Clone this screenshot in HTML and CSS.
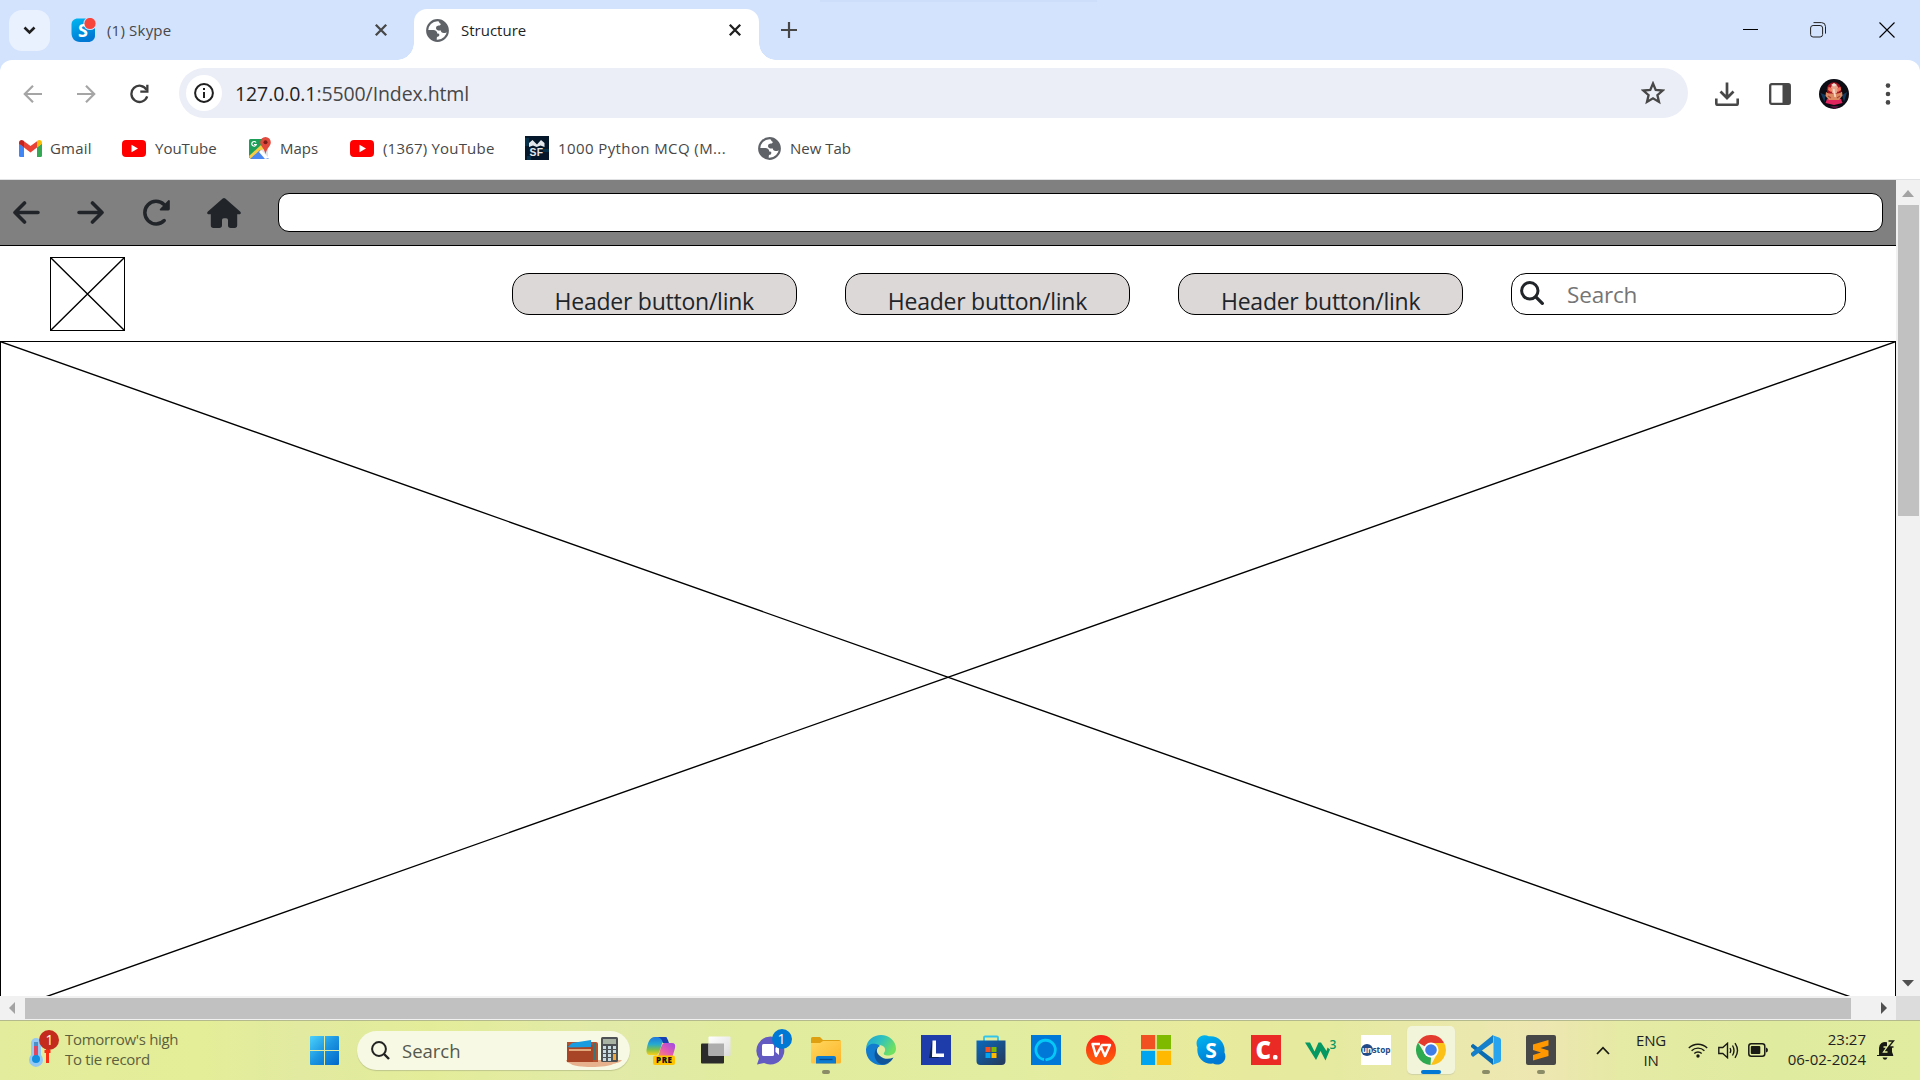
FILE: index.html
```html
<!DOCTYPE html>
<html lang="en">
<head>
<meta charset="utf-8">
<title>Structure</title>
<link rel="stylesheet" href="styles.css">
</head>
<body>
<svg class="defs" width="0" height="0" aria-hidden="true">
  <defs>
    <linearGradient id="sky" x1="0" y1="0" x2="0.4" y2="1"><stop offset="0" stop-color="#00b8f1"/><stop offset="1" stop-color="#0078d4"/></linearGradient>
    <linearGradient id="win" x1="0" y1="0" x2="1" y2="1"><stop offset="0" stop-color="#4cd2fc"/><stop offset="0.5" stop-color="#1b94e0"/><stop offset="1" stop-color="#0067c9"/></linearGradient>
    <symbol id="globe" viewBox="0 0 22 22"><circle cx="11" cy="11" r="9.900" fill="#fff" stroke="#5f6368" stroke-width="2"/><path d="M1.500 10.500H7Q10.500 10.800 10.800 13.800L12.500 14.200Q13.500 17 10.500 17.200L10 20.800A10 10 0 0 1 1.500 10.500z" fill="#5f6368"/><path d="M12.500 1.300A10 10 0 0 1 20.800 11Q20 13.500 17 13.500 14.200 13.200 14.200 11 10 11.500 9.500 8.500 9.500 6.500 12 6.300 14.500 6 14 4.500 12 4 12.500 1.300z" fill="#5f6368"/></symbol>
    <symbol id="youtube" viewBox="0 0 24 17"><rect width="24" height="17" rx="4" fill="#f00"/><path d="M9.500 4.800v7.400l6.500-3.700z" fill="#fff"/></symbol>
    <symbol id="cross" viewBox="0 0 14 14"><path d="M1.800 1.800l10.400 10.400M12.200 1.800L1.800 12.200" stroke="currentColor" stroke-width="2.300" fill="none"/></symbol>
    <symbol id="skype" viewBox="0 0 30 30"><path d="M8.500.3C10 .3 11.500.8 12.800 1.300 22 0 30 8 28.400 17.300 31.500 23.500 27 30 20.800 29.600c-1.300 0-2.600-.4-3.600-1C8 30 0 22 1.500 12.600-1.300 6.500 2.500.5 8.500.3z" fill="url(#sky)"/></symbol>
  </defs>
</svg>

<header class="tabstrip">
  <div class="top-shade"></div>
  <button class="tab-search"><svg width="13" height="9" viewBox="0 0 13 9"><path d="M1.500 1.500l5 5 5-5" fill="none" stroke="#1f1f1f" stroke-width="2.600"/></svg></button>
  <div class="tab">
    <svg width="25" height="25" viewBox="0 0 25 25"><path d="M7 .5h11c4 0 6 3 6 7v10c0 4-3 6.500-7 6.500H9C3.500 24 .5 20 .5 15V6.500C.500 3 3 .500 7 .5z" fill="url(#sky)"/><circle cx="19" cy="5.500" r="6.600" fill="#d3e3fd"/><text x="12" y="18.500" class="glyph" font-size="18" text-anchor="middle">S</text><circle cx="19" cy="5.500" r="5.600" fill="#f8453c"/></svg>
    <span class="tab-title dim">(1) Skype</span>
    <svg class="tab-close dim" width="14" height="14"><use href="#cross"/></svg>
  </div>
  <div class="tab active">
    <svg width="23" height="23"><use href="#globe"/></svg>
    <span class="tab-title">Structure</span>
    <svg class="tab-close" width="14" height="14"><use href="#cross"/></svg>
  </div>
  <svg class="new-tab" width="16" height="16" viewBox="0 0 16 16"><path d="M8 0v16M0 8h16" stroke="#474747" stroke-width="2.200"/></svg>
  <div class="window-controls">
    <svg width="16" height="16" viewBox="0 0 16 16"><path d="M0 7.500h15" stroke="#000"/></svg>
    <svg width="16" height="16" viewBox="0 0 16 16"><rect x=".6" y="3.500" width="12" height="11.500" rx="2.500" fill="none" stroke="#222"/><path d="M3.500.6h8a4 4 0 0 1 4 4v7" fill="none" stroke="#222"/></svg>
    <svg class="win-close" width="16" height="16" viewBox="0 0 16 16"><path d="M.5.500l15 15M15.500.500l-15 15" stroke="#000" stroke-width="1.100"/></svg>
  </div>
</header>

<div class="chrome">
  <div class="toolbar">
    <svg class="nav" width="20" height="20" viewBox="0 0 20 20"><path d="M19 10H2.500M10 1.800L1.800 10l8.200 8.200" fill="none" stroke="#a5a5a5" stroke-width="2.200"/></svg>
    <svg class="nav" width="20" height="20" viewBox="0 0 20 20"><path d="M1 10h16.500M10 1.800l8.200 8.200-8.200 8.200" fill="none" stroke="#a5a5a5" stroke-width="2.200"/></svg>
    <svg class="nav" width="20" height="20" viewBox="0 0 20 20"><path d="M18.200 12.400a8.100 8.100 0 1 1-.6-6.500" fill="none" stroke="#3c3c3c" stroke-width="2.300"/><path d="M19.500.8v8h-8.200V6.500h5.900V.8z" fill="#3c3c3c"/></svg>
    <div class="omnibox">
      <span class="site-info"><svg width="20" height="20" viewBox="0 0 20 20"><circle cx="10" cy="10" r="8.900" fill="none" stroke="#1f1f1f" stroke-width="2"/><path d="M9 9h2v6H9zM9 5h2v2H9z" fill="#1f1f1f"/></svg></span>
      <span class="url"><b>127.0.0.1</b>:5500/Index.html</span>
      <svg class="star" width="24" height="24" viewBox="0 0 24 24"><path d="M12 2.500l2.700 6.400 7 .6-5.300 4.600 1.600 6.800-6-3.600-6 3.600 1.600-6.800-5.300-4.600 7-.6z" fill="none" stroke="#474747" stroke-width="2.300"/></svg>
    </div>
    <svg class="download" width="24" height="24" viewBox="0 0 24 24"><path d="M12 .5v15M5.500 9.500l6.500 6.500 6.500-6.500" fill="none" stroke="#474747" stroke-width="2.700"/><path d="M1.300 16.500v5a1.300 1.300 0 0 0 1.300 1.300h18.800a1.300 1.300 0 0 0 1.300-1.300v-5" fill="none" stroke="#474747" stroke-width="2.600"/></svg>
    <svg class="panel" width="22" height="22" viewBox="0 0 22 22"><rect x="1.200" y="1.200" width="19.600" height="19.600" rx="1.500" fill="none" stroke="#474747" stroke-width="2.300"/><path d="M13.500 1h7v20h-7z" fill="#474747"/></svg>
    <svg class="avatar" width="30" height="30" viewBox="0 0 30 30"><circle cx="15" cy="15" r="15" fill="#0b0c14"/><path d="M1.500 14l5 2-1 7z M28 13l-5 3 2 7z" fill="#123a5e"/><circle cx="15" cy="10.500" r="7.200" fill="#a3121f"/><path d="M8 20q7-3 14 0l1.500 4-8.500 2-8.500-2z" fill="#e0245e"/><ellipse cx="15.500" cy="10" rx="3.800" ry="4.500" fill="#e8a58c"/><path d="M9.500 8l3.500 1-1 4-3-2z M21.500 8L18 9l1 4 3-2z" fill="#f0765c"/><path d="M7 13q3 2 5 1.500h6.500q2.500 0 4.500-2l.5 4-3.500 4.500H10l-3.500-4z" fill="#dd8a62"/><path d="M15 10c-1 4 2 5 1 8" stroke="#f8d8c5" stroke-width="1.800" fill="none"/><path d="M12 6l3-2 3 2-3 1.500z" fill="#eadfd2"/><path d="M9 17l3 2M21 17l-3 2" stroke="#a84a35" stroke-width="1.200"/><path d="M11 27h9l-4 3z" fill="#54123c"/></svg>
    <svg class="dots" width="6" height="22" viewBox="0 0 6 22"><g fill="#474747"><circle cx="3" cy="2.600" r="2.300"/><circle cx="3" cy="11" r="2.300"/><circle cx="3" cy="19.400" r="2.300"/></g></svg>
  </div>
  <nav class="bookmarks">
    <a class="bm bm-gmail"><svg width="23" height="17" viewBox="0 0 23 17"><path d="M0 3.500l5 3.800V17H1.500A1.500 1.500 0 0 1 0 15.500z" fill="#4285f4"/><path d="M18 7.300l5-3.800v12a1.500 1.500 0 0 1-1.500 1.500H18z" fill="#34a853"/><path d="M5 1.200L11.500 6 18 1.200v6.300l-6.500 5L5 7.500z" fill="#ea4335"/><path d="M0 2.500C0 .2 2.700-.7 4.300.6l.7.6v6.300l-5-3.800z" fill="#c5221f"/><path d="M23 2.500c0-2.300-2.700-3.200-4.300-1.900l-.7.6v6.300l5-3.800z" fill="#fbbc04"/></svg><span>Gmail</span></a>
    <a class="bm bm-yt"><svg width="24" height="17"><use href="#youtube"/></svg><span>YouTube</span></a>
    <a class="bm bm-maps"><svg width="22" height="23" viewBox="0 0 22 23"><path d="M1.500 2H13l6 10v9.500H1.500A1.500 1.500 0 0 1 0 20V3.500A1.500 1.500 0 0 1 1.500 2z" fill="#e2e5e8"/><path d="M1.500 2h12L12 10 0 21V3.500A1.500 1.500 0 0 1 1.500 2z" fill="#1d9e59"/><path d="M0 19L12 8l3 3L4 22H1.500z" fill="#f8cd45"/><path d="M1 22l10-9 9 9z" fill="#4a87f2"/><path d="M16 22l-6-7 2-2 8 8z" fill="#fff"/><path d="M16.500 0a5.300 5.300 0 0 1 5.300 5.300c0 4-4.300 6-5.300 12-1-6-5.300-8-5.300-12A5.300 5.300 0 0 1 16.500 0z" fill="#e04b3e"/><circle cx="16.500" cy="5.300" r="2" fill="#7d1d18"/><path d="M7 5.500a2.300 2.300 0 1 0 .3 2H5" fill="none" stroke="#fff" stroke-width="1.200"/></svg><span>Maps</span></a>
    <a class="bm bm-yt2"><svg width="24" height="17"><use href="#youtube"/></svg><span>(1367) YouTube</span></a>
    <a class="bm bm-sf"><svg width="24" height="24" viewBox="0 0 24 24"><rect width="24" height="24" fill="#04172b"/><path d="M0 2h4v8H0zM18 13h6v3h-6zM2 20h4v4H2z" fill="#07304a"/><path d="M4 11V7l3.500-3 4.500 4.500L16 4l3.500 3v4l-4-1.500-3.800 1.500L8 9.500z" fill="#e4e8ec"/><text x="4.500" y="20" class="glyph sf" font-size="10" textLength="14" lengthAdjust="spacingAndGlyphs">SF</text></svg><span>1000 Python MCQ (M...</span></a>
    <a class="bm bm-new"><svg width="23" height="23"><use href="#globe"/></svg><span>New Tab</span></a>
  </nav>
</div>

<div class="viewport">
  <main class="page">
    <div class="browser-bar">
      <svg class="b-left" width="27" height="23" viewBox="0 0 27 23"><path d="M25 11.500H2M11.500 2L2 11.500l9.500 9.500" fill="none" stroke="#212529" stroke-width="3.600" stroke-linecap="round" stroke-linejoin="round"/></svg>
      <svg class="b-right" width="27" height="23" viewBox="0 0 27 23"><path d="M2 11.500h23M15.500 2l9.500 9.500-9.500 9.500" fill="none" stroke="#212529" stroke-width="3.600" stroke-linecap="round" stroke-linejoin="round"/></svg>
      <svg class="b-reload" width="28" height="27" viewBox="0 0 28 27"><path d="M22.200 21.500A11.300 11.300 0 1 1 22 5.500L24 7.500" fill="none" stroke="#212529" stroke-width="3.500" stroke-linecap="round"/><path d="M26.300 1.200q1.500-.5 1.500 1V10q0 1.400-1.400 1.400h-7.800q-1.500-.1-.6-1.400z" fill="#212529"/></svg>
      <svg class="b-home" width="34" height="30" viewBox="0 0 34 30"><path d="M15.700.6a2 2 0 0 1 2.600 0l14.800 13c1.400 1.300.6 2.700-1 2.700h-1.900v11q0 2.700-2.700 2.700h-3.800q-2.700 0-2.700-2.700v-5.200q0-1.900-1.900-1.900h-2.200q-1.900 0-1.900 1.900v5.200q0 2.700-2.700 2.700H6.500q-2.700 0-2.700-2.700v-11H1.900c-1.600 0-2.400-1.400-1-2.700z" fill="#212529"/></svg>
      <div class="address"></div>
    </div>
    <div class="site-header">
      <svg class="logo" width="75" height="74" viewBox="0 0 75 74"><rect x=".5" y=".5" width="74" height="73" fill="#fff" stroke="#000"/><path d="M.5.500l74 73M74.500.500l-74 73" stroke="#000" stroke-width="1.400"/></svg>
      <div class="header-link">Header button/link</div>
      <div class="header-link">Header button/link</div>
      <div class="header-link">Header button/link</div>
      <div class="site-search"><svg width="24" height="24" viewBox="0 0 24 24"><circle cx="9.800" cy="9.800" r="8.200" fill="none" stroke="#212529" stroke-width="3"/><path d="M15.800 15.800l6.500 6.500" stroke="#212529" stroke-width="3.300" stroke-linecap="round"/></svg><span>Search</span></div>
    </div>
    <div class="hero"><svg width="1896" height="673" viewBox="0 0 1896 673"><rect x=".5" y=".5" width="1895" height="672" fill="none" stroke="#000"/><path d="M0 .5l1896 671.500M1896 .5L0 672" stroke="#000" stroke-width="1.400"/></svg></div>
  </main>
  <div class="vscroll">
    <svg width="12" height="7" viewBox="0 0 12 7"><path d="M6 0l6 7H0z" fill="#a3a3a3"/></svg>
    <div class="vthumb"></div>
    <svg class="end" width="12" height="7" viewBox="0 0 12 7"><path d="M6 6.500L12 0H0z" fill="#505050"/></svg>
  </div>
  <div class="hscroll">
    <svg width="7" height="12" viewBox="0 0 7 12"><path d="M0 6l6-6v12z" fill="#a3a3a3"/></svg>
    <div class="hthumb"></div>
    <svg class="end" width="7" height="12" viewBox="0 0 7 12"><path d="M6 6L0 0v12z" fill="#505050"/></svg>
  </div>
  <div class="corner"></div>
</div>

<footer class="taskbar">
  <div class="weather">
    <svg width="32" height="38" viewBox="0 0 32 38"><path d="M2 13a5 5 0 0 1 10 0v12a7 7 0 1 1-10 0z" fill="#94c9f5"/><path d="M5 14a2 2 0 0 1 4 0v13H5z" fill="#e0475f"/><path d="M5 12h4v4H5z" fill="#4c8fc6"/><circle cx="7" cy="29" r="4" fill="#1290df"/><path d="M18.500 19v14M15.500 21.500h6" stroke="#fb2c16" stroke-width="3"/><circle cx="20" cy="10" r="10" fill="#c42b1c"/><text x="20.500" y="15" class="glyph thin" font-size="14" text-anchor="middle">1</text></svg>
    <div class="weather-text"><span>Tomorrow's high</span><span>To tie record</span></div>
  </div>
  <svg class="start" width="29" height="29" viewBox="0 0 29 29"><path d="M1 0h13v14H0V1q0-1 1-1zM15 0h13q1 0 1 1v13H15zM0 15h14v14H1q-1 0-1-1zM15 15h14v13q0 1-1 1H15z" fill="url(#win)"/></svg>
  <div class="task-search">
    <svg width="19" height="19" viewBox="0 0 19 19"><circle cx="8" cy="8" r="6.900" fill="none" stroke="#222" stroke-width="2"/><path d="M13 13l5 5" stroke="#222" stroke-width="2.400"/></svg>
    <span>Search</span>
    <svg class="wallet" width="56" height="30" viewBox="0 0 56 30"><path d="M0 23h56c-2 3-6 3-9 4-5 4-38 4-42 0-2-1-5-2-5-4z" fill="#e8b18e"/><path d="M1 5h29a2 2 0 0 1 2 2v18H5a4 4 0 0 1-4-4z" fill="#b5502f"/><path d="M1 8h26v17H1z" fill="#a74526"/><path d="M3 12h22v2H3z" fill="#e2a97c"/><path d="M2 9.500l4-3.500 19-3v7l-22 .5z" fill="#1a9ce0"/><path d="M27 6h3v17h-3z" fill="#35777a"/><rect x="35" y="0" width="17" height="25" rx="1.500" fill="#4e5254"/><path d="M37 2h13v5H37z" fill="#a8b3a4"/><g fill="#c8dce1"><path d="M37 9h3v3h-3zM42 9h3v3h-3zM47 9h3v3h-3zM37 13h3v3h-3zM42 13h3v3h-3zM47 13h3v3h-3zM37 17h3v3h-3zM42 17h3v3h-3zM37 21h3v3h-3zM42 21h3v3h-3z"/></g><path d="M47 17h3v6h-3z" fill="#f2a737"/></svg>
  </div>
  <div class="apps">
    <div class="app"><svg width="30" height="30" viewBox="0 0 30 30"><defs><linearGradient id="cp1" x1="0" y1="0" x2="0" y2="1"><stop offset="0" stop-color="#2078de"/><stop offset=".4" stop-color="#24a9d0"/><stop offset=".7" stop-color="#7fbf4a"/><stop offset="1" stop-color="#fdd016"/></linearGradient><linearGradient id="cp2" x1="1" y1="0" x2="0" y2="1"><stop offset="0" stop-color="#9b4ae8"/><stop offset=".5" stop-color="#e55bb2"/><stop offset="1" stop-color="#ff9a4f"/></linearGradient></defs><path d="M9 2h12l-4 5c-2 2-3 12-6 13H4q-4 0-3.500-5C1.500 9 3 2 9 2z" fill="url(#cp1)"/><path d="M12 2h7c2 0 3 3 4 6h-6c-1-3-2-5-5-6z" fill="#173fb4"/><path d="M18 8h8q4 0 3 5l-2 7q-1 3-4 3H10c4-1 4-14 8-15z" fill="url(#cp2)"/><rect x="7" y="20.500" width="22" height="9.500" rx="2" fill="#ffc400"/><text x="10" y="28" class="pre" font-size="8" textLength="16">PRE</text></svg></div>
    <div class="app"><svg width="30" height="30" viewBox="0 0 30 30"><defs><linearGradient id="tv" x1="0" y1="0" x2="1" y2="1"><stop offset="0" stop-color="#fff"/><stop offset="1" stop-color="#dcdcdc"/></linearGradient></defs><rect x="0" y="8.500" width="23" height="20" rx="1" fill="#2b2b2b"/><rect x="7.500" y="1.500" width="22" height="19.500" rx="1" fill="url(#tv)"/><path d="M7.500 8.500H23V21H8.500q-1 0-1-1z" fill="#adadad"/></svg></div>
    <div class="app"><svg width="30" height="30" viewBox="0 0 30 30"><path d="M14.500 1.500A14 14 0 1 1 8 28l-7 1.500 2-6A14 14 0 0 1 14.500 1.500z" fill="#645bc2"/><rect x="6" y="9" width="12" height="12" rx="1.500" fill="#fff"/><path d="M19.500 13l3.500-3v10l-3.500-3z" fill="#fff"/></svg><span class="badge">1</span></div>
    <div class="app running"><svg width="30" height="30" viewBox="0 0 30 30"><defs><linearGradient id="fo" x1="0" y1="0" x2="1" y2="1"><stop offset="0" stop-color="#ffd75e"/><stop offset="1" stop-color="#fdb52a"/></linearGradient></defs><path d="M0 3.500Q0 2 1.500 2H9l3 3H28q2 0 2 2v3H0z" fill="#dea010"/><path d="M0 8h9l3-2h18v21q0 1.500-1.500 1.500h-27Q0 28.500 0 27z" fill="url(#fo)"/><path d="M5 28.500V23q0-2 2-2h16q2 0 2 2v5.500z" fill="#0f7bd0"/><path d="M8.500 24.500h13" stroke="#0a4c8c" stroke-width="1.300"/></svg></div>
    <div class="app"><svg width="30" height="30" viewBox="0 0 30 30"><defs><linearGradient id="ed" x1="0" y1="0" x2="1" y2=".5"><stop offset="0" stop-color="#1b9ed8"/><stop offset=".5" stop-color="#2fc2bd"/><stop offset="1" stop-color="#6fe060"/></linearGradient></defs><path d="M0 13C1 5 7.500 0 15 0c8 0 15 6 15 13.500 0 5-4 7-8 7-3.500 0-5-1.200-4-2.500 3-4 0-8-5-8C7 9.500 1 11 0 13z" fill="url(#ed)"/><path d="M0 14c1-4 6-6 10-5 3 .500 4 2 4 2-5 2-6 9-1 14 3 3 7 4 10 3-3 2-6 2-8 2C6 30 0 23 0 15z" fill="#117bd0"/><path d="M13 11c-3 3-3 7 1 10 4 3.500 9 3.500 13.500 1.500C25 27.500 20 30 16 29.500 9 28 5 17 13 11z" fill="#10549a"/></svg></div>
    <div class="app"><svg width="30" height="30" viewBox="0 0 30 30"><path d="M0 0h30v30H0z" fill="#1f3cab"/><path d="M11 6l-3 17 10 0-3-4z" fill="#0c2452"/><path d="M11.500 5.500h3.500v13h8V22H11z" fill="#fff"/></svg></div>
    <div class="app"><svg width="30" height="30" viewBox="0 0 30 30"><defs><linearGradient id="st" x1="0" y1="0" x2="1" y2="1"><stop offset="0" stop-color="#0b69bd"/><stop offset="1" stop-color="#253858"/></linearGradient></defs><path d="M8 6V2.500Q8 1.500 9 1.500h12q1 0 1 1V6" fill="none" stroke="#30c5ec" stroke-width="1.800"/><path d="M.5 5.500h29V26q0 4-4 4h-21q-4 0-4-4z" fill="url(#st)"/><path d="M9.500 12h5v5h-5z" fill="#f25022"/><path d="M15.500 12h5v5h-5z" fill="#7fba00"/><path d="M9.500 18h5v5h-5z" fill="#00a4ef"/><path d="M15.500 18h5v5h-5z" fill="#ffb900"/></svg></div>
    <div class="app"><svg width="30" height="30" viewBox="0 0 30 30"><path d="M0 0h30v30H0z" fill="#0078d7"/><path d="M13 24.500a9.700 9.700 0 1 1 4.500-.3l-3 .8" fill="none" stroke="#05c8f7" stroke-width="2.800"/></svg></div>
    <div class="app"><svg width="30" height="30" viewBox="0 0 30 30"><defs><linearGradient id="wp" x1="0" y1="0" x2="0" y2="1"><stop offset="0" stop-color="#f72218"/><stop offset="1" stop-color="#ff6309"/></linearGradient></defs><circle cx="15" cy="15" r="15" fill="url(#wp)"/><path d="M14 9H6.500l3.500 12 6-11h8L19 21l-4-9" fill="none" stroke="#fff" stroke-width="2.500" stroke-linejoin="round"/></svg></div>
    <div class="app"><svg width="30" height="30" viewBox="0 0 30 30"><path d="M0 0h14.200v14.200H0z" fill="#f25022"/><path d="M15.800 0H30v14.200H15.800z" fill="#7fba00"/><path d="M0 15.800h14.200V30H0z" fill="#00a4ef"/><path d="M15.800 15.800H30V30H15.800z" fill="#ffb900"/></svg></div>
    <div class="app"><svg width="30" height="30" viewBox="0 0 30 30"><use href="#skype" width="30" height="30"/><text x="15" y="22.500" class="glyph" font-size="21" text-anchor="middle">S</text></svg></div>
    <div class="app"><svg width="30" height="30" viewBox="0 0 30 30"><path d="M0 0h30v30H0z" fill="#ea2a24"/><text x="4.500" y="23.500" class="glyph heavy" font-size="24">C</text><rect x="22" y="20" width="4.500" height="4.500" rx="1.500" fill="#fff"/></svg></div>
    <div class="app"><svg width="32" height="30" viewBox="0 0 32 30"><path d="M0 7.500h5l4.500 9 4-9h2.500l5.500 8.500 1-3.500 2.500 2-4.500 11-5-9.500L11 25z" fill="#059862"/><text x="24.500" y="13.500" class="three" font-size="12">3</text></svg></div>
    <div class="app"><svg width="30" height="30" viewBox="0 0 30 30"><path d="M0 0h30v30H0z" fill="#fff"/><circle cx="6" cy="15" r="6" fill="#214a87"/><text x="1" y="18" class="glyph" font-size="9" textLength="10" lengthAdjust="spacingAndGlyphs">un</text><text x="11.500" y="18" class="stop" font-size="9" textLength="18" lengthAdjust="spacingAndGlyphs">stop</text></svg></div>
    <div class="app running current"><svg width="30" height="30" viewBox="0 0 30 30"><path d="M15 15L2 7.500A15 15 0 0 1 28 7.500z" fill="#e33b2e"/><path d="M15 8h13.200A15 15 0 0 1 15 30l6-11z" fill="#fbc116"/><path d="M2 7.500L9 19l6 3.500L14.500 30A15 15 0 0 1 2 7.500z" fill="#2da94f"/><circle cx="15" cy="15" r="7.500" fill="#fff"/><circle cx="15" cy="15" r="5.800" fill="#3f7ee8"/></svg></div>
    <div class="app running"><svg width="30" height="30" viewBox="0 0 30 30"><path d="M0 10.500L2 8.700 22 24v6L0 12z" fill="#0a6db4"/><path d="M0 20l2 2L22 7.500V0L0 18z" fill="#147fcb"/><path d="M21 0l7.500 2.800Q30 3.500 30 5v20q0 1.500-1.500 2.200L21 30q1.500-1 1.500-3V3q0-2-1.500-3z" fill="#28a4ee"/></svg></div>
    <div class="app running"><svg width="30" height="30" viewBox="0 0 30 30"><rect width="30" height="30" rx="2" fill="#474747"/><path d="M7 9.500L22.500 5v5.500l-8 2.500 8 2.500V21L7 25.500V20l8-2.500-8-2.500z" fill="#ff9800"/></svg></div>
  </div>
  <svg class="chev" width="14" height="9" viewBox="0 0 14 9"><path d="M1 8l6-6.300L13 8" fill="none" stroke="#1a1a14" stroke-width="1.800"/></svg>
  <div class="lang"><span>ENG</span><span>IN</span></div>
  <svg class="wifi" width="20" height="16" viewBox="0 0 20 16"><g fill="none" stroke="#1a1a14" stroke-width="1.400"><path d="M.8 6a13 13 0 0 1 18.400 0M3.600 8.800a9 9 0 0 1 12.800 0M6.300 11.500a5.200 5.200 0 0 1 7.400 0"/></g><circle cx="10" cy="14" r="1.700" fill="#1a1a14"/></svg>
  <svg class="vol" width="21" height="17" viewBox="0 0 21 17"><g fill="none" stroke="#1a1a14" stroke-width="1.400"><path d="M.8 5.500h4L9.500 1.300v14.400L4.800 11.500h-4zM12 6q1.500 2.500 0 5M14.500 3.500q3 5 0 10M17 1.200q5 7.300 0 14.600"/></g></svg>
  <svg class="bat" width="20" height="14" viewBox="0 0 20 14"><rect x=".8" y=".8" width="16" height="12.400" rx="2.500" fill="none" stroke="#1a1a14" stroke-width="1.500"/><rect x="2.800" y="3" width="9.500" height="8" rx="1" fill="#1a1a14"/><path d="M18 4.500q2 .5 2 2.500t-2 2.500z" fill="#1a1a14"/></svg>
  <div class="clock"><span>23:27</span><span>06-02-2024</span></div>
  <svg class="bell" width="18" height="20" viewBox="0 0 18 20"><path d="M2 15V8a6 6 0 0 1 8-5.700V7h5v5l1.200 3v1H0v-1z" fill="#1a1a14"/><path d="M5.500 17.500h5q-1 2.300-2.500 2.300t-2.500-2.300z" fill="#1a1a14"/><path d="M11.500 1h5l-5 6h5" fill="none" stroke="#1a1a14" stroke-width="1.400"/><path d="M6.500 7h3.500l-3.500 5h4" fill="none" stroke="#e1eca0" stroke-width="1.300"/></svg>
</footer>
</body>
</html>
```
FILE: styles.css
```css
* { box-sizing: border-box; }
body { margin: 0; width: 1920px; height: 1080px; overflow: hidden; background: #fff; font-family: "Open Sans", "Noto Sans", sans-serif; color: #1f1f1f; }
svg { display: block; flex: none; }
span { white-space: nowrap; }
.defs { position: absolute; }
.glyph { fill: #fff; font-family: "Open Sans", sans-serif; font-weight: 700; }
.thin { font-weight: 400; }
.heavy { font-weight: 800; }
.sf { fill: #e4e8ec; font-family: "Liberation Sans", sans-serif; }
.pre { fill: #111; font-family: "Open Sans", sans-serif; font-weight: 800; }
.three { fill: #059862; font-family: "Open Sans", sans-serif; font-weight: 600; }
.stop { fill: #214a87; font-family: "Open Sans", sans-serif; font-weight: 700; }

/* tab strip; its last 12px show behind the toolbar's rounded corners */
.tabstrip { position: relative; display: flex; align-items: center; height: 72px; margin-bottom: -12px; padding-bottom: 12px; background: #d3e3fd; }
.top-shade { position: absolute; left: 820px; top: 0; width: 277px; height: 2px; background: #cddefa; }
.tab-search { display: flex; align-items: center; justify-content: center; width: 41px; height: 41px; margin-left: 9px; padding: 0; border: 0; border-radius: 13px; background: #eaf1fe; }
.tab { display: flex; align-items: center; height: 60px; width: 343px; margin-left: 21px; }
.tab-title { width: 267px; margin-left: 11px; font-size: 15px; line-height: 22px; }
.tab-title.dim { color: #474747; letter-spacing: 0.2px; }
.tab-close { color: #1f1f1f; }
.tab-close.dim { color: #474747; }
.tab.active { position: relative; align-self: flex-end; width: 344.500px; height: 51px; margin-left: 0; padding: 0 0 9px 12px; border-radius: 13px 13px 0 0; background: #fff; }
.tab.active::before, .tab.active::after { content: ""; position: absolute; bottom: 0; width: 17px; height: 17px; }
.tab.active::before { left: -17px; background: radial-gradient(circle at 0 0, transparent 16.500px, #fff 17px); }
.tab.active::after { right: -17px; background: radial-gradient(circle at 100% 0, transparent 16.500px, #fff 17px); }
.tab.active .tab-title { margin-left: 12px; }
.new-tab { margin-left: 22px; }
.window-controls { display: flex; gap: 51px; margin-left: auto; margin-right: 25px; }
.win-close { margin-left: 2px; }

/* toolbar and bookmarks */
.chrome { position: relative; height: 120px; background: #fff; border-bottom: 1px solid #dfe1e3; border-radius: 12px 12px 0 0; }
.toolbar { display: flex; align-items: center; height: 67px; }
.nav { margin-left: 23px; }
.nav + .nav { margin-left: 33px; }
.omnibox { display: flex; align-items: center; width: 1509px; height: 50px; margin-left: 30px; margin-top: -1px; padding: 0 23px 0 7px; border-radius: 25px; background: #ebeef7; }
.site-info { display: flex; align-items: center; justify-content: center; width: 36px; height: 36px; border-radius: 50%; background: #fff; }
.url { margin-left: 13px; font-size: 19.500px; letter-spacing: -0.100px; color: #474747; }
.url b { font-weight: 400; color: #1f1f1f; }
.star { margin-left: auto; }
.download { margin-left: 27px; }
.panel { margin-left: 30px; }
.avatar { margin-left: 28px; }
.dots { margin-left: 36px; }
.bookmarks { display: flex; height: 44px; padding-left: 19px; margin-top: -1px; }
.bm { display: flex; align-items: center; font-size: 15px; color: #474747; }
.bm span { margin-left: 9px; }
.bm-gmail { width: 103px; }
.bm-gmail span { margin-left: 8px; letter-spacing: 0.200px; }
.bm-yt { width: 127px; }
.bm-maps { width: 101px; }
.bm-yt2 { width: 175px; letter-spacing: 0.200px; }
.bm-sf { width: 233px; letter-spacing: 0.400px; }

/* page viewport with its scrollbars */
.viewport { display: grid; grid-template: 816px 24px / 1896px 24px; }
.page { overflow: hidden; }
.browser-bar { display: flex; align-items: center; height: 66px; background: #808080; border-bottom: 1px solid #000; }
.b-left { margin-left: 13px; }
.b-right { margin-left: 37px; }
.b-reload { margin-left: 38px; }
.b-home { margin-left: 37px; }
.address { width: 1605px; height: 39px; margin-left: 37px; border: 1px solid #000; border-radius: 11px; background: #fff; }
.site-header { display: flex; align-items: flex-start; height: 95px; padding-left: 50px; }
.logo { margin-top: 11px; margin-right: 386.500px; }
.header-link { flex: none; width: 285.500px; height: 42px; margin-right: 47.700px; margin-top: 27px; padding-top: 14px; border: 1px solid #000; border-radius: 17px; background: #dcd8d8; font-size: 23px; line-height: 27px; text-align: center; color: #212529; white-space: nowrap; letter-spacing: -0.250px; }
.site-search { flex: none; display: flex; align-items: center; width: 335px; height: 42px; margin-top: 27px; padding-left: 8px; border: 1px solid #000; border-radius: 15px; background: #fff; font-size: 22.500px; color: #757575; letter-spacing: -0.200px; }
.site-search svg { margin-top: -2px; }
.site-search span { margin-left: 23px; }
.vscroll { display: flex; flex-direction: column; align-items: center; background: #f1f1f1; padding: 10px 0 9px; }
.vthumb { width: 21px; height: 311px; margin-top: 8px; background: #c1c1c1; }
.vscroll .end { margin-top: auto; }
.hscroll { display: flex; align-items: center; background: #f1f1f1; padding: 0 8px 0 9px; }
.hthumb { width: 1826px; height: 21px; margin-left: 9px; background: #c1c1c1; }
.hscroll .end { margin-left: auto; }
.corner { background: #dcdcdc; }

/* taskbar */
.taskbar { display: flex; align-items: center; height: 60px; padding-bottom: 1px; border-top: 1px solid #b4ba8c; background: linear-gradient(90deg, #e3ec9c 0, #e4ee98 200px, #e1eaa0 300px, #e3ed99 430px, #e2eaa8 600px, #e1ec9e 750px, #e2eda1 1000px, #e8ea9c 1200px, #e5eaa0 1330px, #ebe8ae 1480px, #eee6b2 1540px, #e5eaa4 1620px, #dfeb9f 1780px, #e1eca0 1920px); }
.weather { display: flex; align-items: center; width: 281px; padding-left: 29px; margin-top: -3px; }
.weather-text { display: flex; flex-direction: column; margin-left: 4px; font-size: 15px; line-height: 20px; letter-spacing: -0.300px; color: #5c6040; }
.start { margin-left: 29px; }
.task-search { display: flex; align-items: center; width: 273px; height: 39px; margin-left: 18px; padding-left: 14px; border-radius: 20px; background: #f7f9e4; box-shadow: 0 1px 1px #c0c78c; font-size: 18.500px; color: #55584c; }
.task-search span { width: 59px; margin-left: 12px; }
.wallet { margin-left: 105px; margin-top: 3px; }
.apps { display: flex; align-items: center; margin-left: 3.500px; }
.app { position: relative; display: flex; align-items: center; justify-content: center; width: 55px; height: 48px; }
.app.running::after { content: ""; position: absolute; left: 23px; bottom: 0; width: 8px; height: 4px; border-radius: 2px; background: #8a8b67; }
.app.current { width: 48px; margin: 0 3.500px; border-radius: 5px; background: #f3f5da; box-shadow: 0 1px 1px #d0d3a6; }
.app.current::after { left: 14px; width: 20px; background: #0078d4; }
.badge { position: absolute; left: 28px; top: 3px; width: 20px; height: 20px; border-radius: 50%; background: #0078d4; color: #fff; font-size: 14px; line-height: 20px; text-align: center; }
.chev { margin-left: 27.500px; }
.lang { display: flex; flex-direction: column; align-items: center; width: 40px; margin-left: 21px; margin-top: -1px; font-size: 15px; line-height: 20px; letter-spacing: -0.200px; }
.wifi { margin-left: 17px; }
.vol { margin-left: 10px; }
.bat { margin-left: 9px; }
.clock { display: flex; flex-direction: column; align-items: flex-end; width: 98px; margin-top: -3px; font-size: 15px; line-height: 20px; }
.bell { margin-left: 11px; }
```
